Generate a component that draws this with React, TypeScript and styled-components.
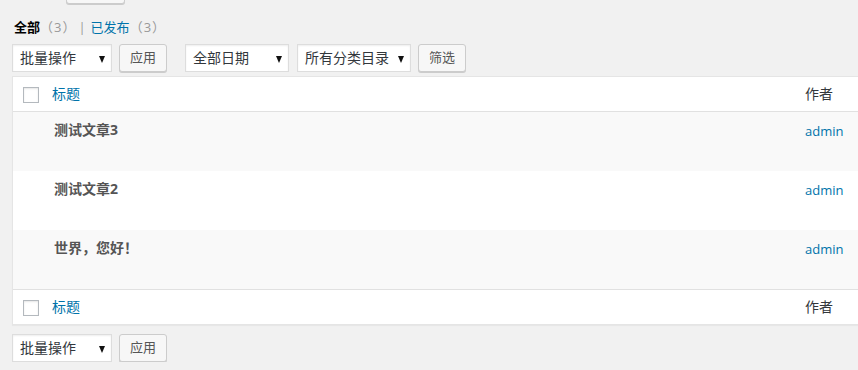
import React from "react";
import styled, { createGlobalStyle } from "styled-components";

const GlobalStyle = createGlobalStyle`
  html, body {
    margin: 0;
    padding: 0;
    background: #f1f1f1;
    overflow: hidden;
  }
  body {
    font-family: "Open Sans", "Noto Sans CJK SC", sans-serif;
    font-size: 13px;
    color: #444;
  }
`;

const Wrap = styled.div`
  padding: 0 0 0 12px;
  width: 860px;
`;

const TopButton = styled.div`
  width: 57px;
  height: 26px;
  margin: -24px 0 0 54px;
  border: 1px solid #ccc;
  border-radius: 3px;
  background: #f7f7f7;
  box-shadow: 0 1px 0 #ccc;
`;

const Subsub = styled.ul`
  list-style: none;
  margin: 13px 0 0 2px;
  padding: 0;
  display: flex;
  align-items: center;
  height: 20px;
  font-size: 13px;
  line-height: 20px;
  color: #666;
`;

const SubItem = styled.li<{ $current?: boolean }>`
  color: ${(p) => (p.$current ? "#000" : "#0073aa")};
  font-weight: ${(p) => (p.$current ? 700 : 400)};
`;

const Count = styled.span`
  color: #999;
  font-weight: 400;
  letter-spacing: 1px;
`;

const Sep = styled.li`
  color: #999;
  margin: 0 5px 0 2px;
`;

const TableNav = styled.div<{ $top?: boolean }>`
  display: flex;
  align-items: center;
  height: 28px;
  margin: ${(p) => (p.$top ? "7px 0 4px" : "9px 0 0")};
`;

const Select = styled.div<{ $w: number; $gap?: number }>`
  position: relative;
  box-sizing: border-box;
  width: ${(p) => p.$w}px;
  height: 28px;
  margin-left: ${(p) => p.$gap ?? 0}px;
  padding: 0 0 0 7px;
  background: #fff;
  border: 1px solid #ddd;
  box-shadow: inset 0 1px 2px rgba(0, 0, 0, 0.07);
  font-size: 14px;
  line-height: 25px;
  color: #32373c;
  &::after {
    content: "";
    position: absolute;
    right: 6px;
    top: 11px;
    border-left: 3.5px solid transparent;
    border-right: 3.5px solid transparent;
    border-top: 7px solid #111;
  }
`;

const Button = styled.div<{ $gap: number }>`
  box-sizing: border-box;
  height: 28px;
  margin-left: ${(p) => p.$gap}px;
  padding: 0 10px;
  border: 1px solid #ccc;
  border-radius: 3px;
  background: #f7f7f7;
  box-shadow: 0 1px 0 #ccc;
  color: #555;
  font-size: 13px;
  line-height: 25px;
`;

const Table = styled.div`
  background: #fff;
  border: 1px solid #e5e5e5;
  box-shadow: 0 1px 1px rgba(0, 0, 0, 0.04);
`;

const Row = styled.div<{ $alt?: boolean; $head?: "top" | "foot" }>`
  display: grid;
  grid-template-columns: 31px 1fr 76px;
  height: ${(p) => (p.$head ? 35 : 59)}px;
  box-sizing: border-box;
  background: ${(p) => (p.$alt ? "#f9f9f9" : "#fff")};
  border-bottom: ${(p) => (p.$head === "top" ? "1px solid #e1e1e1" : "none")};
  border-top: ${(p) => (p.$head === "foot" ? "1px solid #e1e1e1" : "none")};
  align-items: ${(p) => (p.$head ? "center" : "start")};
`;

const CheckCell = styled.div`
  display: flex;
  justify-content: flex-end;
`;

const Checkbox = styled.span`
  box-sizing: border-box;
  display: block;
  width: 16px;
  height: 16px;
  margin-right: 5px;
  margin-top: 1px;
  border: 1px solid #b4b9be;
  background: #fff;
  box-shadow: inset 0 1px 2px rgba(0, 0, 0, 0.1);
`;

const HeadLink = styled.div`
  padding-left: 8px;
  color: #0073aa;
  font-size: 14px;
  line-height: 20px;
`;

const HeadText = styled.div`
  padding-left: 10px;
  color: #32373c;
  font-size: 14px;
  line-height: 20px;
`;

const PostTitle = styled.div`
  padding: 8px 0 0 10px;
  color: #555;
  font-size: 14px;
  font-weight: 700;
  line-height: 20px;
`;

const Author = styled.div`
  padding: 9px 0 0 10px;
  color: #0073aa;
  font-size: 13px;
  line-height: 20px;
`;

const posts = ["测试文章3", "测试文章2", "世界，您好！"];

function Nav({ top }: { top?: boolean }) {
  return (
    <TableNav $top={top}>
      <Select $w={100}>批量操作</Select>
      <Button $gap={7}>应用</Button>
      {top && (
        <>
          <Select $w={104} $gap={18}>
            全部日期
          </Select>
          <Select $w={114} $gap={8}>
            所有分类目录
          </Select>
          <Button $gap={7}>筛选</Button>
        </>
      )}
    </TableNav>
  );
}

export default function App() {
  return (
    <>
      <GlobalStyle />
      <Wrap>
        <TopButton />
        <Subsub>
          <SubItem $current>
            全部<Count>（3）</Count>
          </SubItem>
          <Sep>|</Sep>
          <SubItem>
            已发布<Count>（3）</Count>
          </SubItem>
        </Subsub>
        <Nav top />
        <Table>
          <Row $head="top">
            <CheckCell>
              <Checkbox />
            </CheckCell>
            <HeadLink>标题</HeadLink>
            <HeadText>作者</HeadText>
          </Row>
          {posts.map((t, i) => (
            <Row key={t} $alt={i % 2 === 0}>
              <div />
              <PostTitle>{t}</PostTitle>
              <Author>admin</Author>
            </Row>
          ))}
          <Row $head="foot">
            <CheckCell>
              <Checkbox />
            </CheckCell>
            <HeadLink>标题</HeadLink>
            <HeadText>作者</HeadText>
          </Row>
        </Table>
        <Nav />
      </Wrap>
    </>
  );
}
